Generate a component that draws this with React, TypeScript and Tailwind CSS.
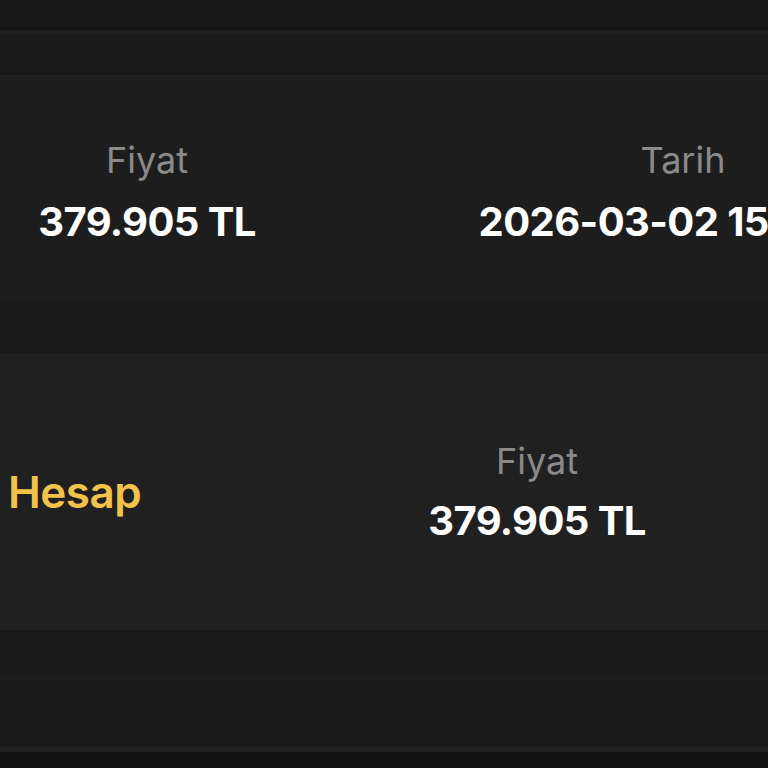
export default function App() {
  return (
    <div
      className="flex h-[768px] w-[768px] flex-col overflow-hidden bg-[#191919]"
      style={{ fontFamily: "Inter, 'Noto Sans', sans-serif" }}
    >
      <div className="h-[27px] shrink-0 bg-[#181818]" />
      <div className="h-[3px] shrink-0 bg-[#141414]" />
      <div className="h-[4px] shrink-0 bg-[#1f1f1f]" />
      <div className="h-[38px] shrink-0 bg-[#1a1a1a]" />
      <div className="h-[3px] shrink-0 bg-[#151515]" />
      <div className="h-[5px] shrink-0 bg-[#1e1e1e]" />

      {/* row 1 */}
      <div className="flex h-[223px] shrink-0 items-center bg-[#1d1d1d]">
        <div className="flex w-[294px] shrink-0 flex-col items-center whitespace-nowrap">
          <span className="text-[36px] leading-none text-[#8a8a8a]">Fiyat</span>
          <span className="mt-6 text-[40px] font-bold leading-none tracking-[-0.6px] text-white">
            379.905 TL
          </span>
        </div>
        <div className="ml-[188px] flex w-[402px] shrink-0 flex-col items-center whitespace-nowrap">
          <span className="text-[36px] leading-none text-[#8a8a8a]">Tarih</span>
          <span className="mt-6 text-[40px] font-bold leading-none tracking-[-0.6px] text-white">
            2026-03-02 15:42:18
          </span>
        </div>
      </div>

      <div className="h-[50px] shrink-0 bg-[#191919]" />

      {/* row 2 */}
      <div className="flex h-[277px] shrink-0 items-center bg-[#202020]">
        <div className="w-[428px] shrink-0 pl-2">
          <span className="text-[44px] font-semibold leading-none tracking-[-0.5px] text-[#f3c24b]">
            Hesap
          </span>
        </div>
        <div className="flex w-[218px] shrink-0 flex-col items-center whitespace-nowrap">
          <span className="text-[36px] leading-none text-[#8a8a8a]">Fiyat</span>
          <span className="mt-[22px] text-[40px] font-bold leading-none tracking-[-0.6px] text-white">
            379.905 TL
          </span>
        </div>
      </div>

      <div className="h-[46px] shrink-0 bg-[#191919]" />
      <div className="h-[4px] shrink-0 bg-[#1c1c1c]" />
      <div className="h-[67px] shrink-0 bg-[#1a1a1a]" />
      <div className="h-[5px] shrink-0 bg-[#212121]" />
      <div className="flex-1 bg-[#111111]" />
    </div>
  );
}
